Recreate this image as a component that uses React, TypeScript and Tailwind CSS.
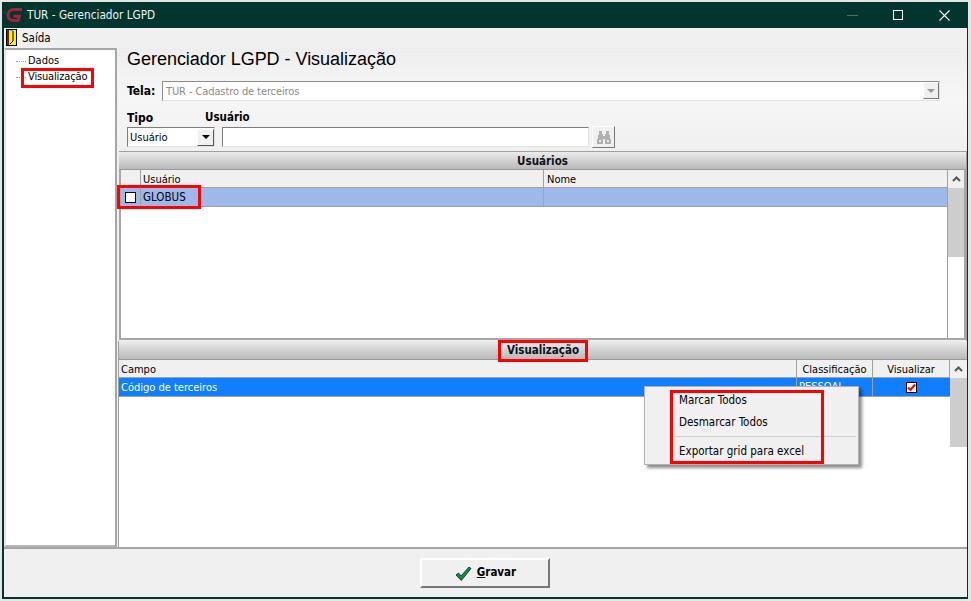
import { Fragment } from "react";

const FONT = "font-['DejaVu_Sans_Condensed','Liberation_Sans',Arial,sans-serif]";

function Logo() {
  return (
    <svg width="18" height="16" viewBox="0 0 18 16" className="block">
      <path d="M16 2.500H8C4.300 2.500 2 5 2 8s2.300 5.500 6 5.500h4.200L13.300 9.200H7.500" fill="none" stroke="#a3233f" strokeWidth="3" />
    </svg>
  );
}

function DoorIcon() {
  return (
    <svg width="11" height="17" viewBox="0 0 11 17" className="block">
      <rect x="0" y="0" width="11" height="17" fill="#000" />
      <rect x="1" y="1" width="2" height="15" fill="#8c1010" />
      <rect x="3" y="1" width="7" height="15" fill="#fff200" />
      <path d="M4 1h3v1H4z" fill="#22c8e8" />
      <path d="M7 2v10l-3 3" fill="none" stroke="#000" strokeWidth="1" />
    </svg>
  );
}

function Binoculars() {
  return (
    <svg width="16" height="13" viewBox="0 0 16 13" className="block" fill="#b0b0b0">
      <path d="M3 0h3v3h1v2h2V3h1V0h3v4h1v4h1v5h-6V8H7v5H1V8h1V4h1z" />
      <rect x="3" y="9" width="2" height="2" fill="#efefef" />
      <rect x="11" y="9" width="2" height="2" fill="#efefef" />
    </svg>
  );
}

function ScrollBar({ thumbHeight, width }: { thumbHeight: number; width: string }) {
  return (
    <div className={`${width} flex flex-col bg-white shrink-0 h-full`}>
      <div className="h-[18px] bg-[#f0f0f0] flex items-center justify-center shrink-0">
        <svg width="9" height="6" viewBox="0 0 9 6">
          <path d="M1 5l3.500-3.500L8 5" fill="none" stroke="#555" strokeWidth="2" />
        </svg>
      </div>
      <div className="bg-[#cdcdcd] shrink-0" style={{ height: thumbHeight }} />
    </div>
  );
}

function SectionBar({ title, boxed, height }: { title: string; boxed?: boolean; height: string }) {
  return (
    <div className={`${height} shrink-0 pt-[2px] bg-gradient-to-b from-[#ececec] to-[#b9b9b9] flex items-center justify-center border-b border-[#9a9a9a]`}>
      <span className="relative text-[11.500px] font-bold text-[#10101a]">
        {title}
        {boxed && <span className="absolute -left-[9px] -right-[9px] -top-[2px] -bottom-[2px] border-[3px] border-[#fe0000]" />}
      </span>
    </div>
  );
}

function HeaderCell({ label, className }: { label?: string; className: string }) {
  return (
    <div className={`h-full pt-[3px] bg-[#f0f0f0] border-r border-[#a0a0a0] flex items-center text-[11px] text-black ${className}`}>
      {label}
    </div>
  );
}

export default function App() {
  return (
    <div className={`${FONT} w-[971px] h-[601px] overflow-hidden bg-[#e6e6e6] pl-[2px] pr-[3px] pt-[2px] pb-[2px]`}>
      <div className="relative h-full flex flex-col bg-[#f0f0f0] border-l-2 border-r border-b-2 border-[#03352f]">
        {/* titulo */}
        <div className="h-[26px] shrink-0 -ml-[2px] -mr-[1px] bg-[#03352f] flex items-center text-white">
          <div className="pl-[4px] pr-[3px]">
            <Logo />
          </div>
          <span className="pt-[2px] text-[11.700px] text-[#eef3f2]">TUR - Gerenciador LGPD</span>
          <div className="ml-auto flex items-center pr-px">
            <div className="w-[46px] flex justify-center">
              <div className="w-[11px] h-px bg-[#4d6f6a] mt-px" />
            </div>
            <div className="w-[46px] flex justify-center">
              <div className="w-[10px] h-[10px] border border-white" />
            </div>
            <div className="w-[46px] flex justify-center">
              <svg width="11" height="11" viewBox="0 0 11 11">
                <path d="M.5.5l10 10M10.500.5l-10 10" stroke="#fff" strokeWidth="1.100" />
              </svg>
            </div>
          </div>
        </div>

        {/* menu */}
        <div className="h-[19px] shrink-0 flex items-center pl-[2px] gap-[5px] text-[11.500px] text-black">
          <DoorIcon />
          <span className="pt-[2px]">Saída</span>
        </div>

        <div className="flex-1 min-h-0 flex pt-px">
          {/* arvore */}
          <div className="w-[113px] shrink-0 bg-white border-2 border-l-[#e4e4e4] border-[#a6a6a6] border-b-[#b5b5b5] pl-[9px] pt-[3px] text-[11px] text-black">
            <div className="flex items-center h-[16px]">
              <div className="w-[10px] border-t border-dotted border-[#999] ml-px" />
              <span className="ml-[2px]">Dados</span>
            </div>
            <div className="flex items-center h-[16px]">
              <div className="w-[10px] border-t border-dotted border-[#999] ml-px" />
              <span className="relative ml-[2px] tracking-[-0.15px]">
                Visualização
                <span className="absolute -left-[7px] -right-[7px] -top-[1px] -bottom-[3px] border-[3px] border-[#fe0000]" />
              </span>
            </div>
          </div>

          {/* conteudo */}
          <div className="flex-1 min-w-0 flex flex-col ml-px">
            <div className="h-[103px] shrink-0 pl-[9px] pt-px bg-gradient-to-b from-[#eeeeee] via-[#f6f6f6] to-[#f0f0f0]">
              <div className="text-[18px] leading-[21px] font-['Liberation_Sans',Arial,sans-serif] tracking-[-0.03px] text-black">Gerenciador LGPD - Visualização</div>

              <div className="flex items-center mt-[10px] h-[21px] pr-[27px]">
                <span className="w-[35px] text-[12px] font-bold text-black">Tela:</span>
                <div className="flex-1 h-[20px] bg-white border border-[#8d8d8d] border-b-[#e2e2e2] border-r-[#e2e2e2] flex items-center pl-[3px] text-[11px] tracking-[-0.1px] text-[#8b8b8b]">
                  <span className="pt-[3px]">TUR - Cadastro de terceiros</span>
                  <div className="ml-auto w-[16px] h-[17px] bg-[#f0f0f0] border border-white border-r-[#777] border-b-[#777] flex items-center justify-center">
                    <div className="w-0 h-0 border-l-[4px] border-r-[4px] border-t-[4px] border-l-transparent border-r-transparent border-t-[#999]" />
                  </div>
                </div>
              </div>

              <div className="flex mt-[9px] h-[16px] items-center text-[12px] font-bold text-black">
                <span className="w-[78px]">Tipo</span>
                <span className="text-[11.500px]">Usuário</span>
              </div>

              <div className="flex items-center h-[22px]">
                <div className="w-[88px] h-[20px] bg-white border border-[#7d7d7d] border-b-[#e2e2e2] border-r-[#e2e2e2] flex items-center pl-[2px] text-[11px] text-black">
                  <span className="pt-[3px]">Usuário</span>
                  <div className="ml-auto w-[17px] h-[17px] bg-[#f0f0f0] border border-white border-r-[#555] border-b-[#555] flex items-center justify-center">
                    <div className="w-0 h-0 border-l-[4px] border-r-[4px] border-t-[4px] border-l-transparent border-r-transparent border-t-black" />
                  </div>
                </div>
                <div className="ml-[7px] w-[367px] h-[20px] bg-white border border-[#7d7d7d] border-b-[#e2e2e2] border-r-[#e2e2e2]" />
                <div className="ml-[3px] w-[23px] h-[22px] bg-[#f0f0f0] border border-white border-r-[#777] border-b-[#777] flex items-center justify-center">
                  <Binoculars />
                </div>
              </div>
            </div>

            {/* usuarios */}
            <div className="h-[190px] shrink-0 ml-px flex flex-col border-t border-r border-[#a0a0a0]">
              <SectionBar title="Usuários" height="h-[18px]" />
              <div className="flex-1 min-h-0 mb-px flex border-2 border-[#a6a6a6] border-t-0 bg-white">
                <div className="flex-1 min-w-0 flex flex-col">
                  <div className="h-[18px] shrink-0 flex border-b border-[#a0a0a0]">
                    <HeaderCell className="w-[20px]" />
                    <HeaderCell label="Usuário" className="w-[403px] pl-[2px]" />
                    <HeaderCell label="Nome" className="flex-1 pl-[3px] border-r-0" />
                  </div>
                  <div className="h-[19px] shrink-0 flex bg-[#9db8e9] border-b border-[#a0a0a0]">
                    <div className="w-[20px] flex items-center justify-center border-r border-[#a0a0a0]">
                      <div className="relative w-[11px] h-[11px] bg-white border border-black" />
                    </div>
                    <div className="w-[403px] pl-[2px] pt-px flex items-center text-[11.500px] text-black border-r border-[#8fa8d4]">GLOBUS</div>
                  </div>
                </div>
                <ScrollBar thumbHeight={69} width="w-[17px] border-l border-[#a0a0a0]" />
              </div>
            </div>

            {/* visualizacao */}
            <div className="flex-1 min-h-0 flex flex-col border-l border-[#a0a0a0]">
              <SectionBar title="Visualização" boxed height="h-[19px]" />
              <div className="flex-1 min-h-0 flex bg-white">
                <div className="flex-1 min-w-0 flex flex-col">
                  <div className="h-[18px] shrink-0 flex border-b border-[#a0a0a0]">
                    <HeaderCell label="Campo" className="w-[678px] pl-[2px]" />
                    <HeaderCell label="Classificação" className="w-[76px] justify-center" />
                    <HeaderCell label="Visualizar" className="flex-1 justify-center" />
                  </div>
                  <div className="h-[19px] shrink-0 flex bg-[#0f7fff] border-b border-[#a0a0a0] text-white text-[11px]">
                    <div className="w-[678px] pl-[2px] pt-[2px] flex items-center border-r border-[#a0a0a0]">Código de terceiros</div>
                    <div className="w-[76px] pl-[2px] flex items-center border-r border-[#a0a0a0]">PESSOAL</div>
                    <div className="flex-1 flex items-center justify-center">
                      <div className="w-[11px] h-[11px] bg-white border border-black flex items-center justify-center">
                        <svg width="9" height="9" viewBox="0 0 9 9">
                          <path d="M1 4.500l2.500 2.500L8 1.500" fill="none" stroke="#f00" strokeWidth="2" />
                        </svg>
                      </div>
                    </div>
                  </div>
                </div>
                <ScrollBar thumbHeight={69} width="w-[17px]" />
              </div>
            </div>
          </div>
        </div>

        {/* rodape */}
        <div className="h-[50px] shrink-0 border-t-2 border-[#a6a6a6] flex items-center justify-center pr-[2px]">
          <button className="w-[130px] h-[30px] bg-[#f0f0f0] border-2 border-white border-r-[#777] border-b-[#777] flex items-center justify-center gap-[5px] pl-[2px] text-[11.500px] font-bold text-black">
            <svg width="17" height="15" viewBox="0 0 17 15">
              <path d="M1 9l2.500-2L6 10l8-9 2 1.500L6.300 14.500z" fill="#0a9a16" stroke="#06106e" strokeWidth="0.800" />
            </svg>
            <span>
              <span className="underline">G</span>ravar
            </span>
          </button>
        </div>

        {/* menu de contexto */}
        <div className="absolute left-[640px] top-[384px] w-[215px] h-[79px] pt-[3px] bg-[#f0f0f0] border border-[#b0b0b0] shadow-[3px_3px_3px_rgba(0,0,0,0.45)] text-[11.500px] text-black">
          {["Marcar Todos", "Desmarcar Todos"].map((item) => (
            <Fragment key={item}>
              <div className="h-[22px] pl-[34px] flex items-center">{item}</div>
            </Fragment>
          ))}
          <div className="mt-[2px] mb-[4px] ml-[30px] mr-[2px] border-t border-[#cfcfcf]" />
          <div className="h-[22px] pl-[34px] flex items-center">Exportar grid para excel</div>
          <div className="absolute left-[25px] top-[3px] w-[154px] h-[74px] border-[3px] border-[#fe0000]" />
        </div>

        {/* destaque GLOBUS */}
        <div className="absolute left-[113px] top-[183px] w-[84px] h-[24px] border-[3px] border-[#fe0000]" />
      </div>
    </div>
  );
}
